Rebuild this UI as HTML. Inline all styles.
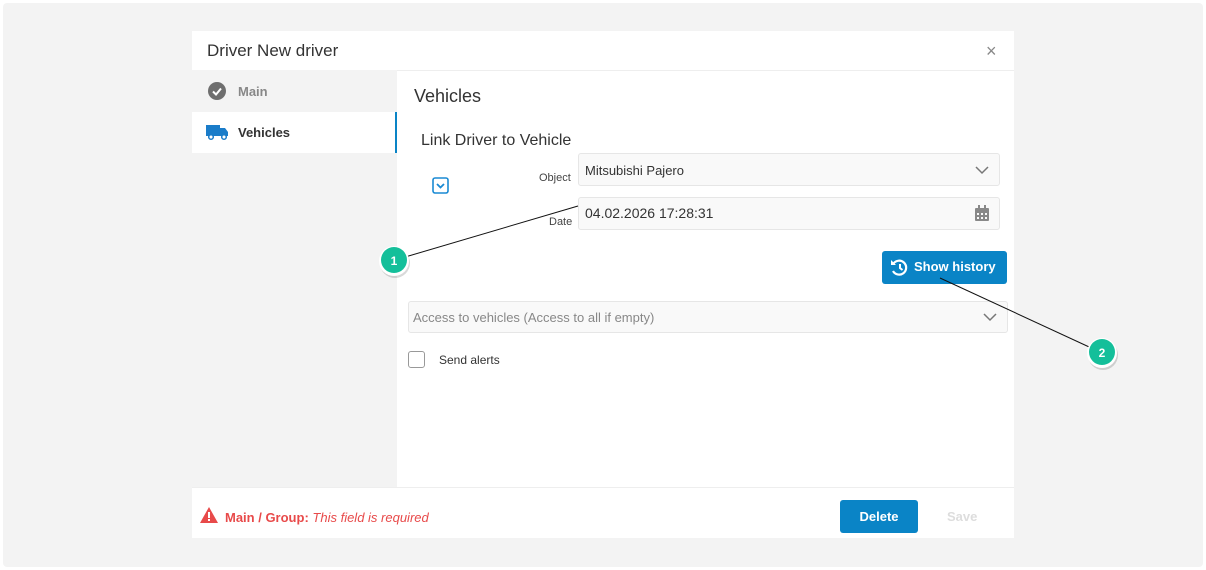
<!DOCTYPE html>
<html><head><style>
*{box-sizing:border-box;margin:0;padding:0}
body{width:1206px;height:570px;background:#fff;font-family:"Liberation Sans",sans-serif;position:relative;overflow:hidden;color:#333}
.a{position:absolute}
#bg{left:3px;top:3px;width:1200px;height:564px;background:#f3f3f3;border-radius:4px}
#modal{left:192px;top:31px;width:822px;height:507px;background:#fff}
.field{background:#f9f9f9;border:1px solid #e6e6e6;border-radius:3px}
</style></head><body>
<div class="a" id="bg"></div>
<div class="a" id="modal"></div>
<div class="a" style="left:207px;top:41px;font-size:17px;color:#333">Driver New driver</div>
<div class="a" style="left:986px;top:41px;font-size:18px;color:#888">×</div>
<div class="a" style="left:192px;top:70px;width:822px;height:1px;background:#eee"></div>
<div class="a" style="left:192px;top:70px;width:205px;height:417px;background:#f3f3f3"></div>
<div class="a" style="left:192px;top:112px;width:205px;height:41px;background:#fff;border-right:2px solid #0a84c6"></div>
<svg class="a" style="left:208px;top:82px" width="18" height="18"><circle cx="9" cy="9" r="9" fill="#6e6e6e"/><path d="M5 9.5l3 3 5-6" stroke="#fff" stroke-width="2" fill="none"/></svg>
<div class="a" style="left:238px;top:84px;font-size:13px;font-weight:bold;color:#888">Main</div>
<svg class="a" style="left:206px;top:124px" width="24" height="17"><rect x="0" y="1" width="14" height="11" fill="#1a7cc9"/><path d="M14 4h5l3 4v4h-8z" fill="#1a7cc9"/><circle cx="5" cy="13" r="2.3" fill="#fff" stroke="#1a7cc9" stroke-width="1.5"/><circle cx="18" cy="13" r="2.3" fill="#fff" stroke="#1a7cc9" stroke-width="1.5"/></svg>
<div class="a" style="left:238px;top:125px;font-size:13px;font-weight:bold;color:#333">Vehicles</div>
<div class="a" style="left:414px;top:86px;font-size:18px;color:#333">Vehicles</div>
<div class="a" style="left:421px;top:132px;font-size:16px;color:#333">Link Driver to Vehicle</div>
<svg class="a" style="left:432px;top:177px" width="18" height="17"><rect x="1" y="1" width="15" height="15" rx="2" fill="none" stroke="#1a8ad4" stroke-width="1.6"/><path d="M5 7l3.5 3.5L12 7" stroke="#1a8ad4" stroke-width="1.8" fill="none"/></svg>
<div class="a" style="left:539px;top:172px;font-size:11px;color:#444">Object</div>
<div class="a" style="left:549px;top:216px;font-size:11px;color:#444">Date</div>
<div class="a field" style="left:578px;top:153px;width:422px;height:33px"></div>
<div class="a" style="left:585px;top:163px;font-size:13px;color:#333">Mitsubishi Pajero</div>
<svg class="a" style="left:975px;top:165px" width="14" height="10"><path d="M1 2l6 6 6-6" stroke="#777" stroke-width="1.5" fill="none"/></svg>
<div class="a field" style="left:578px;top:197px;width:422px;height:33px"></div>
<div class="a" style="left:585px;top:205px;font-size:14px;color:#333">04.02.2026 17:28:31</div>
<svg class="a" style="left:975px;top:205px" width="14" height="16"><rect x="0" y="3" width="14" height="13" rx="1" fill="#888"/><rect x="3" y="0" width="2" height="4" fill="#888"/><rect x="9" y="0" width="2" height="4" fill="#888"/><g fill="#f9f9f9"><rect x="2" y="8" width="2" height="2"/><rect x="6" y="8" width="2" height="2"/><rect x="10" y="8" width="2" height="2"/><rect x="2" y="12" width="2" height="2"/><rect x="6" y="12" width="2" height="2"/><rect x="10" y="12" width="2" height="2"/></g></svg>
<div class="a" style="left:882px;top:251px;width:125px;height:33px;background:#0a84c6;border-radius:3px"></div>
<svg class="a" style="left:889px;top:258px" width="20" height="19"><path d="M4.5 5.5A7 7 0 1 1 4 13" stroke="#fff" stroke-width="2.2" fill="none"/><path d="M2 2v5h5z" fill="#fff"/><path d="M11 6v4l2.5 2" stroke="#fff" stroke-width="2" fill="none"/></svg>
<div class="a" style="left:914px;top:259px;font-size:13px;font-weight:bold;color:#fff">Show history</div>
<div class="a field" style="left:408px;top:301px;width:600px;height:32px"></div>
<div class="a" style="left:413px;top:310px;font-size:13px;color:#888">Access to vehicles (Access to all if empty)</div>
<svg class="a" style="left:983px;top:312px" width="14" height="10"><path d="M1 2l6 6 6-6" stroke="#777" stroke-width="1.5" fill="none"/></svg>
<div class="a" style="left:408px;top:351px;width:17px;height:17px;border:1.5px solid #999;border-radius:3px"></div>
<div class="a" style="left:439px;top:353px;font-size:12px;color:#333">Send alerts</div>
<div class="a" style="left:192px;top:487px;width:822px;height:1px;background:#eee"></div>
<svg class="a" style="left:200px;top:507px" width="18" height="16"><path d="M9 0L18 16H0z" fill="#e84a4a"/><rect x="8" y="5" width="2" height="6" fill="#fff"/><rect x="8" y="12" width="2" height="2" fill="#fff"/></svg>
<div class="a" style="left:225px;top:510px;font-size:13px;color:#e84a4a"><b>Main / Group:</b> <i>This field is required</i></div>
<div class="a" style="left:840px;top:500px;width:78px;height:33px;background:#0a84c6;border-radius:3px;color:#fff;font-size:13px;font-weight:bold;text-align:center;line-height:33px">Delete</div>
<div class="a" style="left:947px;top:509px;font-size:13px;font-weight:bold;color:#ddd">Save</div>
<svg class="a" style="left:0;top:0" width="1206" height="570">
<line x1="578" y1="206" x2="395" y2="260" stroke="#111" stroke-width="1"/>
<line x1="940" y1="278" x2="1100" y2="352" stroke="#111" stroke-width="1"/>
<circle cx="395" cy="263" r="15" fill="#000" opacity=".15"/>
<circle cx="394" cy="261" r="15" fill="#fff"/>
<circle cx="394" cy="260" r="13" fill="#14bf9a"/>
<text x="394" y="265" font-size="12" font-weight="bold" fill="#fff" text-anchor="middle" font-family="Liberation Sans">1</text>
<circle cx="1103" cy="355" r="15" fill="#000" opacity=".15"/>
<circle cx="1102" cy="353" r="15" fill="#fff"/>
<circle cx="1102" cy="352" r="13" fill="#14bf9a"/>
<text x="1102" y="357" font-size="12" font-weight="bold" fill="#fff" text-anchor="middle" font-family="Liberation Sans">2</text>
</svg>
</body></html>
